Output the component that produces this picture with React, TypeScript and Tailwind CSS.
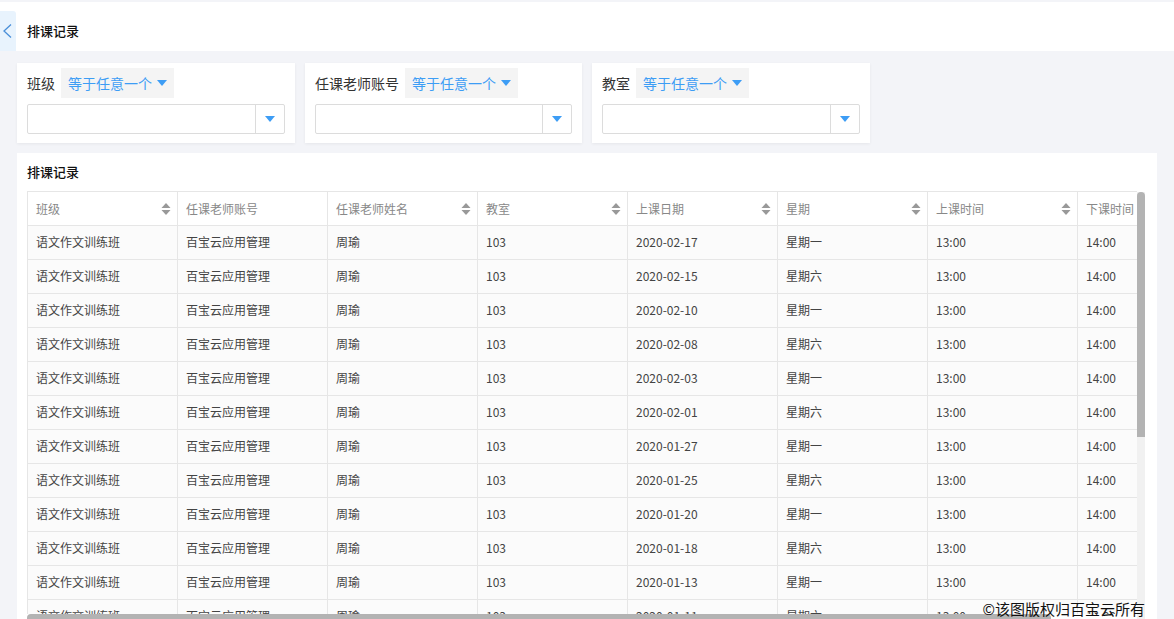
const font = { fontFamily: '"Noto Sans CJK SC", "Noto Sans", sans-serif' }

const filters = [
  { label: '班级', w: 'w-[278px]' },
  { label: '任课老师账号', w: 'w-[277px]' },
  { label: '教室', w: 'w-[278px]' },
]

const columns = [
  { title: '班级', sort: true },
  { title: '任课老师账号', sort: false },
  { title: '任课老师姓名', sort: true },
  { title: '教室', sort: true },
  { title: '上课日期', sort: true },
  { title: '星期', sort: true },
  { title: '上课时间', sort: true },
  { title: '下课时间', sort: false },
]

const dates = [
  ['2020-02-17', '星期一'],
  ['2020-02-15', '星期六'],
  ['2020-02-10', '星期一'],
  ['2020-02-08', '星期六'],
  ['2020-02-03', '星期一'],
  ['2020-02-01', '星期六'],
  ['2020-01-27', '星期一'],
  ['2020-01-25', '星期六'],
  ['2020-01-20', '星期一'],
  ['2020-01-18', '星期六'],
  ['2020-01-13', '星期一'],
  ['2020-01-11', '星期六'],
]

function Caret({ className = '' }: { className?: string }) {
  return (
    <svg width="10" height="6" viewBox="0 0 10 6" className={className}>
      <path d="M0 0h10L5 6z" fill="#3d9df5" />
    </svg>
  )
}

function SortIcon() {
  return (
    <svg width="10" height="14" viewBox="0 0 10 14" className="shrink-0">
      <path d="M5 1L9.5 6h-9z" fill="#999" />
      <path d="M5 13L9.5 8h-9z" fill="#999" />
    </svg>
  )
}

export default function App() {
  return (
    <div className="relative h-[619px] w-[1174px] overflow-hidden bg-[#f3f4f8]" style={font}>
      {/* Header */}
      <div className="mt-[2px] flex h-[49px] items-end bg-white">
        <div className="h-[40px] w-[16px] rounded-tr-[3px] bg-[#e8f3fd]">
          <svg width="16" height="40" viewBox="0 0 16 40">
            <path d="M11 13.5L4 20l7 6.5" fill="none" stroke="#4a8fd8" strokeWidth="1.3" />
          </svg>
        </div>
        <div className="flex h-[40px] items-center pl-[11px] text-[13px] font-medium text-[#111]">
          排课记录
        </div>
      </div>

      {/* Filters */}
      <div className="mt-[12px] flex gap-[10px] pl-[17px]">
        {filters.map((f) => (
          <div
            key={f.label}
            className={`${f.w} h-[80px] bg-white px-[10px] pt-[5px] shadow-[0_1px_3px_rgba(0,0,0,0.06)]`}
          >
            <div className="flex h-[30px] items-center">
              <span className="mr-[6px] text-[14px] text-[#333]">{f.label}</span>
              <span className="flex h-[30px] items-center gap-[5px] bg-[#f4f4f4] px-[7px] text-[14px] text-[#3d9df5]">
                等于任意一个
                <Caret />
              </span>
            </div>
            <div className="mt-[6px] flex h-[30px] rounded-[2px] border border-[#dcdcdc]">
              <div className="flex-1" />
              <div className="flex w-[29px] items-center justify-center border-l border-[#dcdcdc]">
                <Caret />
              </div>
            </div>
          </div>
        ))}
      </div>

      {/* Table card */}
      <div className="ml-[17px] mt-[10px] w-[1140px] bg-white pl-[10px]">
        <div className="flex h-[38px] items-center text-[13px] font-medium text-[#111]">排课记录</div>
        <div className="flex">
          <div className="w-[1110px] overflow-hidden">
            <div className="w-[1200px] text-[12px]">
              <div className="flex h-[35px] border-y border-[#e6e6e6] bg-white">
                {columns.map((c) => (
                  <div
                    key={c.title}
                    className="flex w-[150px] items-center justify-between border-l border-[#e6e6e6] pl-[8px] pr-[6px] text-[#888]"
                  >
                    <span>{c.title}</span>
                    {c.sort && <SortIcon />}
                  </div>
                ))}
              </div>
              <div className="h-[388px] overflow-hidden">
                {dates.map(([d, w]) => (
                  <div key={d} className="flex h-[34px] border-b border-[#e6e6e6] bg-[#fbfbfb] text-[#444]">
                    {['语文作文训练班', '百宝云应用管理', '周瑜', '103', d, w, '13:00', '14:00'].map((v, i) => (
                      <div key={i} className="flex w-[150px] items-center border-l border-[#e6e6e6] pb-[1px] pl-[8px]">
                        {v}
                      </div>
                    ))}
                  </div>
                ))}
              </div>
              <div className="h-[8px] w-[1024px] rounded-[4px] bg-[#b3b3b3]" />
            </div>
          </div>
          <div className="mt-[1px] h-[430px] w-[8px] bg-[#f1f1f1]">
            <div className="h-[245px] w-[8px] rounded-t-[4px] bg-[#b3b3b3]" />
          </div>
        </div>
      </div>

      {/* Watermark */}
      <div className="absolute bottom-[1px] right-[29px] text-[15px] leading-[18px] text-[#111]">
        ©该图版权归百宝云所有
      </div>
    </div>
  )
}
